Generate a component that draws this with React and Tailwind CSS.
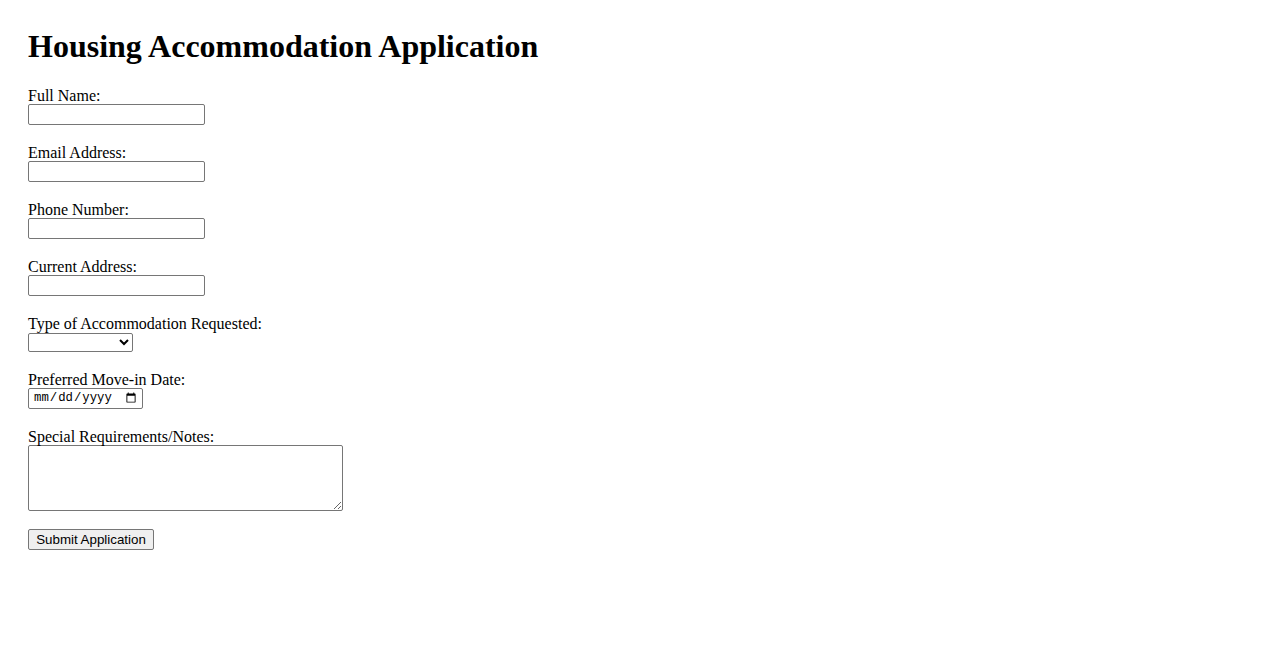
import { useState } from 'react'

const fieldClass =
    "block w-[177px] h-[21px] border border-[#767676] rounded-[2px] bg-white px-[2px] py-[1px] text-[13.33px] font-['Liberation_Sans',Arial,sans-serif]"

function Field({ label, children }) {
    return (
        <div className="mb-[18px]">
            <label className="block h-[18px] pt-[1px] leading-[17px] text-[16px]">{label}</label>
            {children}
        </div>
    )
}

export default function App() {
    const [form, setForm] = useState({
        name: '',
        email: '',
        phone: '',
        address: '',
        type: '',
        date: '',
        notes: '',
    })

    const update = (key) => (e) => setForm({ ...form, [key]: e.target.value })

    return (
        <div className="min-h-screen bg-white text-black font-['Liberation_Serif','Times_New_Roman',serif] pt-[28px] pl-[28px]">
            <h1 className="text-[32px] leading-[37px] font-bold mb-[21px]">Housing Accommodation Application</h1>

            <form onSubmit={(e) => e.preventDefault()}>
                <Field label="Full Name:">
                    <input type="text" value={form.name} onChange={update('name')} className={fieldClass} />
                </Field>
                <Field label="Email Address:">
                    <input type="email" value={form.email} onChange={update('email')} className={fieldClass} />
                </Field>
                <Field label="Phone Number:">
                    <input type="tel" value={form.phone} onChange={update('phone')} className={fieldClass} />
                </Field>
                <Field label="Current Address:">
                    <input type="text" value={form.address} onChange={update('address')} className={fieldClass} />
                </Field>
                <Field label="Type of Accommodation Requested:">
                    <select
                        value={form.type}
                        onChange={update('type')}
                        className="block mt-[1px] w-[105px] h-[19px] border border-[#767676] rounded-[2px] bg-white text-[13.33px] font-['Liberation_Sans',Arial,sans-serif]"
                    >
                        <option value=""></option>
                        <option value="apartment">Apartment</option>
                        <option value="house">House</option>
                        <option value="dormitory">Dormitory</option>
                        <option value="shared">Shared Room</option>
                    </select>
                </Field>
                <Field label="Preferred Move-in Date:">
                    <input
                        type="date"
                        value={form.date}
                        onChange={update('date')}
                        className="block w-[115px] h-[21px] border border-[#767676] rounded-[2px] bg-white pl-[4px] pr-[3px] py-[1px] text-[12.3px] font-['Liberation_Mono',monospace]"
                    />
                </Field>
                <Field label="Special Requirements/Notes:">
                    <textarea
                        value={form.notes}
                        onChange={update('notes')}
                        className="block w-[315px] h-[66px] border border-[#767676] rounded-[2px] bg-white px-[2px] py-[1px] text-[13.33px] font-['Liberation_Mono',monospace] resize"
                    />
                </Field>
                <button
                    type="submit"
                    className="block w-[126px] h-[21px] border border-[#767676] rounded-[2px] bg-[#efefef] px-[6px] py-[1px] text-[13.33px] leading-[17px] font-['Liberation_Sans',Arial,sans-serif] text-black"
                >
                    Submit Application
                </button>
            </form>
        </div>
    )
}
